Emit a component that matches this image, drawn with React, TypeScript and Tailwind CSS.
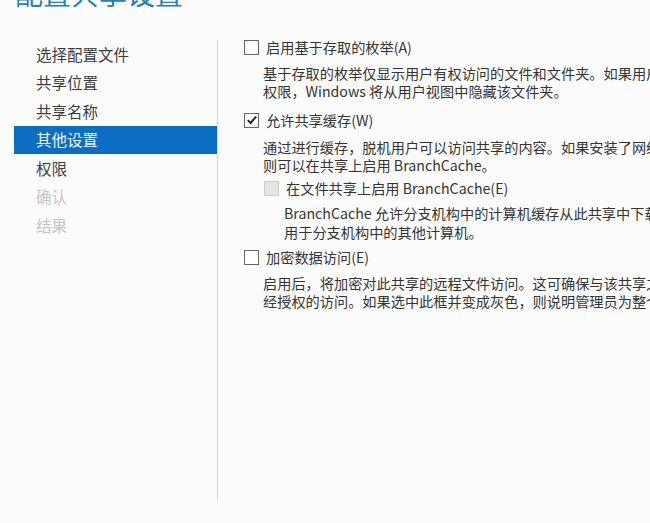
const font = { fontFamily: '"Noto Sans CJK SC", "Noto Sans", sans-serif' };

const steps = [
  { label: "选择配置文件", state: "done" },
  { label: "共享位置", state: "done" },
  { label: "共享名称", state: "done" },
  { label: "其他设置", state: "active" },
  { label: "权限", state: "done" },
  { label: "确认", state: "disabled" },
  { label: "结果", state: "disabled" },
];

function Box({ checked, disabled }: { checked?: boolean; disabled?: boolean }) {
  return (
    <span
      className={`flex h-[15px] w-[15px] shrink-0 items-center justify-center border ${
        disabled ? "border-[#cccccc] bg-[#e4e4e4]" : "border-[#666] bg-white"
      }`}
    >
      {checked && (
        <svg viewBox="0 0 12 12" className="h-[12px] w-[12px]">
          <path d="M1.8 6.2 L4.6 9 L10.2 2.6" fill="none" stroke="#222" strokeWidth="1.9" />
        </svg>
      )}
    </span>
  );
}

export default function App() {
  return (
    <div
      className="h-[523px] w-[650px] overflow-hidden bg-[#fcfcfc] text-[#333]"
      style={font}
    >
      {/* title, mostly scrolled off the top */}
      <div className="ml-[15px] mt-[-21px] h-[28px] whitespace-nowrap text-[28px] leading-[28px] text-[#2a7fb0]">
        配置共享设置
      </div>

      <div className="mt-[33px] flex">
        {/* wizard steps */}
        <div className="ml-[14px] h-[461px] w-[204px] shrink-0 border-r border-[#d9d9d9]">
          {steps.map((s) => (
            <div
              key={s.label}
              className={`flex h-[28.5px] items-center pl-[22px] text-[15.5px] ${
                s.state === "active"
                  ? "bg-[#0a6fc2] text-[#f2f6fb]"
                  : s.state === "disabled"
                  ? "text-[#c4c4c4]"
                  : "text-[#3c3c3c]"
              }`}
            >
              {s.label}
            </div>
          ))}
        </div>

        {/* options */}
        <div className="min-w-0 flex-1 overflow-hidden whitespace-nowrap pl-[26px] text-[14.2px]">
          <label className="flex h-[14px] items-center gap-[7px] leading-[14px]">
            <Box />
            <span>启用基于存取的枚举(A)</span>
          </label>
          <div className="ml-[19px] mt-[10px] leading-[18px]">
            <div>基于存取的枚举仅显示用户有权访问的文件和文件夹。如果用户对某个文件夹没有读取(或等效)</div>
            <div>权限，Windows 将从用户视图中隐藏该文件夹。</div>
          </div>

          <label className="mt-[13px] flex h-[14px] items-center gap-[7px] leading-[14px]">
            <Box checked />
            <span>允许共享缓存(W)</span>
          </label>
          <div className="ml-[19px] mt-[11px] leading-[18px]">
            <div>通过进行缓存，脱机用户可以访问共享的内容。如果安装了网络文件 BranchCache 角色服务，</div>
            <div>则可以在共享上启用 BranchCache。</div>
          </div>

          <label className="ml-[20px] mt-[7px] flex h-[14px] items-center gap-[7px] leading-[14px]">
            <Box disabled />
            <span>在文件共享上启用 BranchCache(E)</span>
          </label>
          <div className="ml-[40px] mt-[9px] leading-[19px]">
            <div>BranchCache 允许分支机构中的计算机缓存从此共享中下载的文件，然后允许这些文件安全地</div>
            <div>用于分支机构中的其他计算机。</div>
          </div>

          <label className="mt-[8px] flex h-[14px] items-center gap-[7px] leading-[14px]">
            <Box />
            <span>加密数据访问(E)</span>
          </label>
          <div className="ml-[19px] mt-[10px] leading-[18px]">
            <div>启用后，将加密对此共享的远程文件访问。这可确保与该共享之间的数据免受未</div>
            <div>经授权的访问。如果选中此框并变成灰色，则说明管理员为整个服务器启用了加密。</div>
          </div>
        </div>
      </div>
    </div>
  );
}
